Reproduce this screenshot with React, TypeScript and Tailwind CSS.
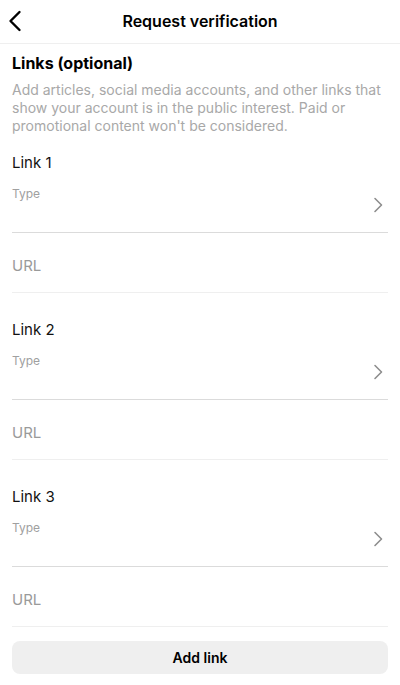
import React from "react";

function Chevron() {
  return (
    <svg width="12" height="16" viewBox="0 0 12 16" className="mt-[11px] mr-[4px]">
      <polyline points="3,1.5 9.5,8 3,14.5" fill="none" stroke="#8e8e8e" strokeWidth="1.6" strokeLinecap="round" strokeLinejoin="round" />
    </svg>
  );
}

function LinkBlock({ n, first }: { n: number; first?: boolean }) {
  return (
    <div className={first ? "mt-[18px]" : "mt-[27px]"}>
      <div className="text-[15px] leading-[20px] text-[#111]">Link {n}</div>
      <div className="flex justify-between items-start pt-[13px] h-[60px] border-b border-[#dbdbdb]">
        <div className="text-[12px] leading-[16px] text-[#a0a0a0]">Type</div>
        <Chevron />
      </div>
      <div className="pt-[23px] pb-[16px] border-b border-[#efefef]">
        <div className="text-[15px] leading-[20px] text-[#9a9a9a]">URL</div>
      </div>
    </div>
  );
}

export default function App() {
  return (
    <div className="w-[400px] h-[685px] bg-white overflow-hidden" style={{ fontFamily: "Inter, 'Noto Sans', sans-serif" }}>
      <div className="relative h-[44px] flex items-center justify-center border-b border-[#efefef]">
        <svg width="14" height="22" viewBox="0 0 14 22" className="absolute left-[8px] top-[10px]">
          <polyline points="11.5,2 2.5,11 11.5,20" fill="none" stroke="#000" strokeWidth="2.4" strokeLinecap="round" strokeLinejoin="round" />
        </svg>
        <div className="text-[16px] font-semibold text-black -mt-[1px]">Request verification</div>
      </div>
      <div className="px-[12px]">
        <div className="pt-[9px] text-[16px] leading-[20px] font-bold text-black">Links (optional)</div>
        <div className="mt-[8px] text-[14px] leading-[18px] text-[#a8a8a8]">
          Add articles, social media accounts, and other links that show your account is in the public interest. Paid or promotional content won't be considered.
        </div>
        <LinkBlock n={1} first />
        <LinkBlock n={2} />
        <LinkBlock n={3} />
        <button className="mt-[14px] w-full h-[33px] rounded-[8px] bg-[#efefef] text-[14px] font-semibold text-black flex items-center justify-center">
          Add link
        </button>
      </div>
    </div>
  );
}
